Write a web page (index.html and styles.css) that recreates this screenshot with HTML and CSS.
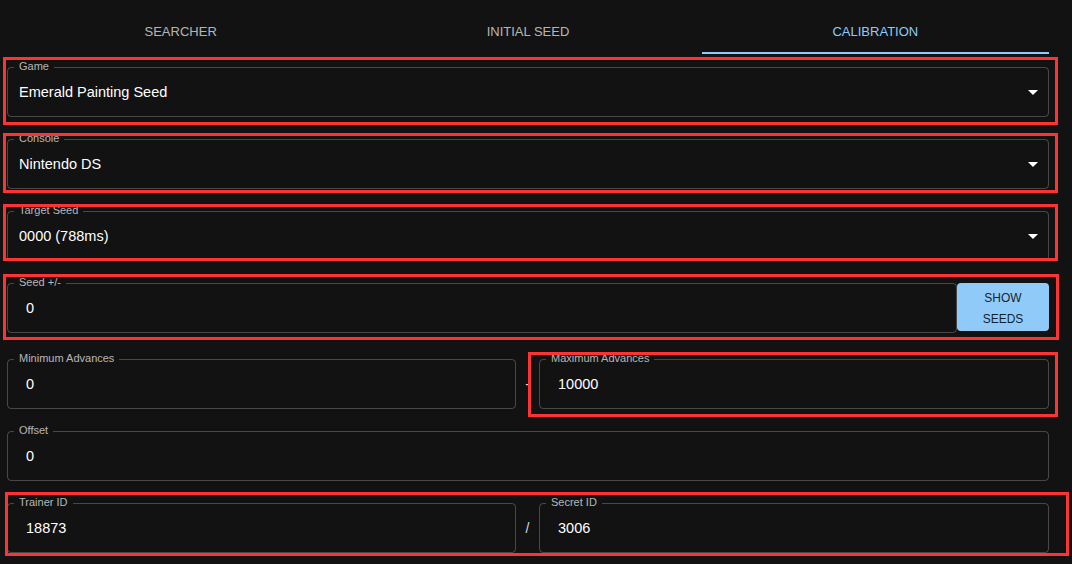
FILE: index.html
```html
<!DOCTYPE html>
<html lang="en">
<head>
<meta charset="utf-8">
<title>Calibration</title>
<link rel="stylesheet" href="styles.css">
</head>
<body>
<div class="page">
  <nav class="tabs">
    <div class="tab">Searcher</div>
    <div class="tab">Initial Seed</div>
    <div class="tab active">Calibration</div>
  </nav>

  <form class="form">
    <div class="hl hl-game">
      <div class="field">
        <span class="label">Game</span>
        <span class="value">Emerald Painting Seed</span>
        <svg class="arrow" viewBox="0 0 24 24" width="24" height="24"><path d="M7 10l5 5 5-5z"/></svg>
      </div>
    </div>

    <div class="hl hl-console">
      <div class="field">
        <span class="label">Console</span>
        <span class="value">Nintendo DS</span>
        <svg class="arrow" viewBox="0 0 24 24" width="24" height="24"><path d="M7 10l5 5 5-5z"/></svg>
      </div>
    </div>

    <div class="hl hl-target">
      <div class="field">
        <span class="label">Target Seed</span>
        <span class="value">0000 (788ms)</span>
        <svg class="arrow" viewBox="0 0 24 24" width="24" height="24"><path d="M7 10l5 5 5-5z"/></svg>
      </div>
    </div>

    <div class="hl hl-seed">
      <div class="seed-row">
        <div class="field input grow">
          <span class="label">Seed +/-</span>
          <span class="value">0</span>
        </div>
        <button type="button" class="btn">Show Seeds</button>
      </div>
    </div>

    <div class="pair adv-row">
      <div class="field input">
        <span class="label">Minimum Advances</span>
        <span class="value">0</span>
      </div>
      <div class="sep">-</div>
      <div class="hl hl-max">
        <div class="field input">
          <span class="label">Maximum Advances</span>
          <span class="value">10000</span>
        </div>
      </div>
    </div>

    <div class="field input">
      <span class="label">Offset</span>
      <span class="value">0</span>
    </div>

    <div class="hl hl-trainer">
      <div class="pair">
        <div class="field input">
          <span class="label">Trainer ID</span>
          <span class="value">18873</span>
        </div>
        <div class="sep">/</div>
        <div class="field input">
          <span class="label">Secret ID</span>
          <span class="value">3006</span>
        </div>
      </div>
    </div>
  </form>
</div>
</body>
</html>
```

FILE: styles.css
```css
html, body {
  margin: 0;
  background: #121212;
}

body {
  font-family: "Liberation Sans", Arial, sans-serif;
  color: #fff;
}

.page {
  width: 1042px;
  padding: 7px 0 8px 7px;
}

.tabs {
  display: grid;
  grid-template-columns: repeat(3, 1fr);
  height: 47px;
}

.tab {
  display: flex;
  align-items: center;
  justify-content: center;
  padding-top: 2px;
  font-size: 13px;
  text-transform: uppercase;
  color: rgba(255, 255, 255, 0.7);
}

.tab.active {
  color: #90caf9;
  box-shadow: inset 0 -2px 0 #90caf9;
}

.form {
  display: flex;
  flex-direction: column;
  gap: 22px;
  margin: 13px 0 0;
}

.field {
  position: relative;
  box-sizing: border-box;
  height: 50px;
  border: 1px solid rgba(255, 255, 255, 0.23);
  border-radius: 4px;
  display: flex;
  align-items: center;
}

.label {
  position: absolute;
  top: -9px;
  left: 6px;
  padding: 0 5px;
  background: #121212;
  font-size: 11px;
  line-height: 14px;
  color: rgba(255, 255, 255, 0.7);
  white-space: nowrap;
}

.value {
  flex: 1;
  padding-left: 11px;
  font-size: 14.5px;
  color: #fff;
}

.field.input .value {
  padding-left: 18px;
}

.arrow {
  margin-right: 3px;
  fill: #fff;
}

.seed-row {
  display: flex;
  align-items: flex-start;
}

.grow {
  flex: 1;
}

.btn {
  width: 92px;
  height: 48px;
  margin: 0;
  padding: 4px 14px 0;
  border: 0;
  border-radius: 4px;
  background: #90caf9;
  color: rgba(0, 0, 0, 0.87);
  font-family: "Liberation Sans", Arial, sans-serif;
  font-size: 12px;
  line-height: 21px;
  text-transform: uppercase;
}

.pair {
  display: grid;
  grid-template-columns: 509px 23px 510px;
}

.adv-row {
  margin-top: 4px;
}

.sep {
  display: flex;
  align-items: center;
  justify-content: center;
  font-size: 14px;
  color: #ddd;
}

/* red annotation outlines */
.hl {
  position: relative;
}

.hl::after {
  content: "";
  position: absolute;
  border: 3px solid #fe3434;
  pointer-events: none;
}

.hl-game::after    { top: -10px; bottom: -8px; left: -4px;  right: -9px; }
.hl-console::after { top: -6px;  bottom: -4px; left: -4px;  right: -9px; }
.hl-target::after  { top: -7px;  bottom: 0;    left: -4px;  right: -9px; }
.hl-seed::after    { top: -9px;  bottom: -7px; left: -4px;  right: -10px; }
.hl-max::after     { top: -7px;  bottom: -8px; left: -11px; right: -9px; }
.hl-trainer::after { top: -11px; bottom: -3px; left: -2px;  right: -20px; }
```
